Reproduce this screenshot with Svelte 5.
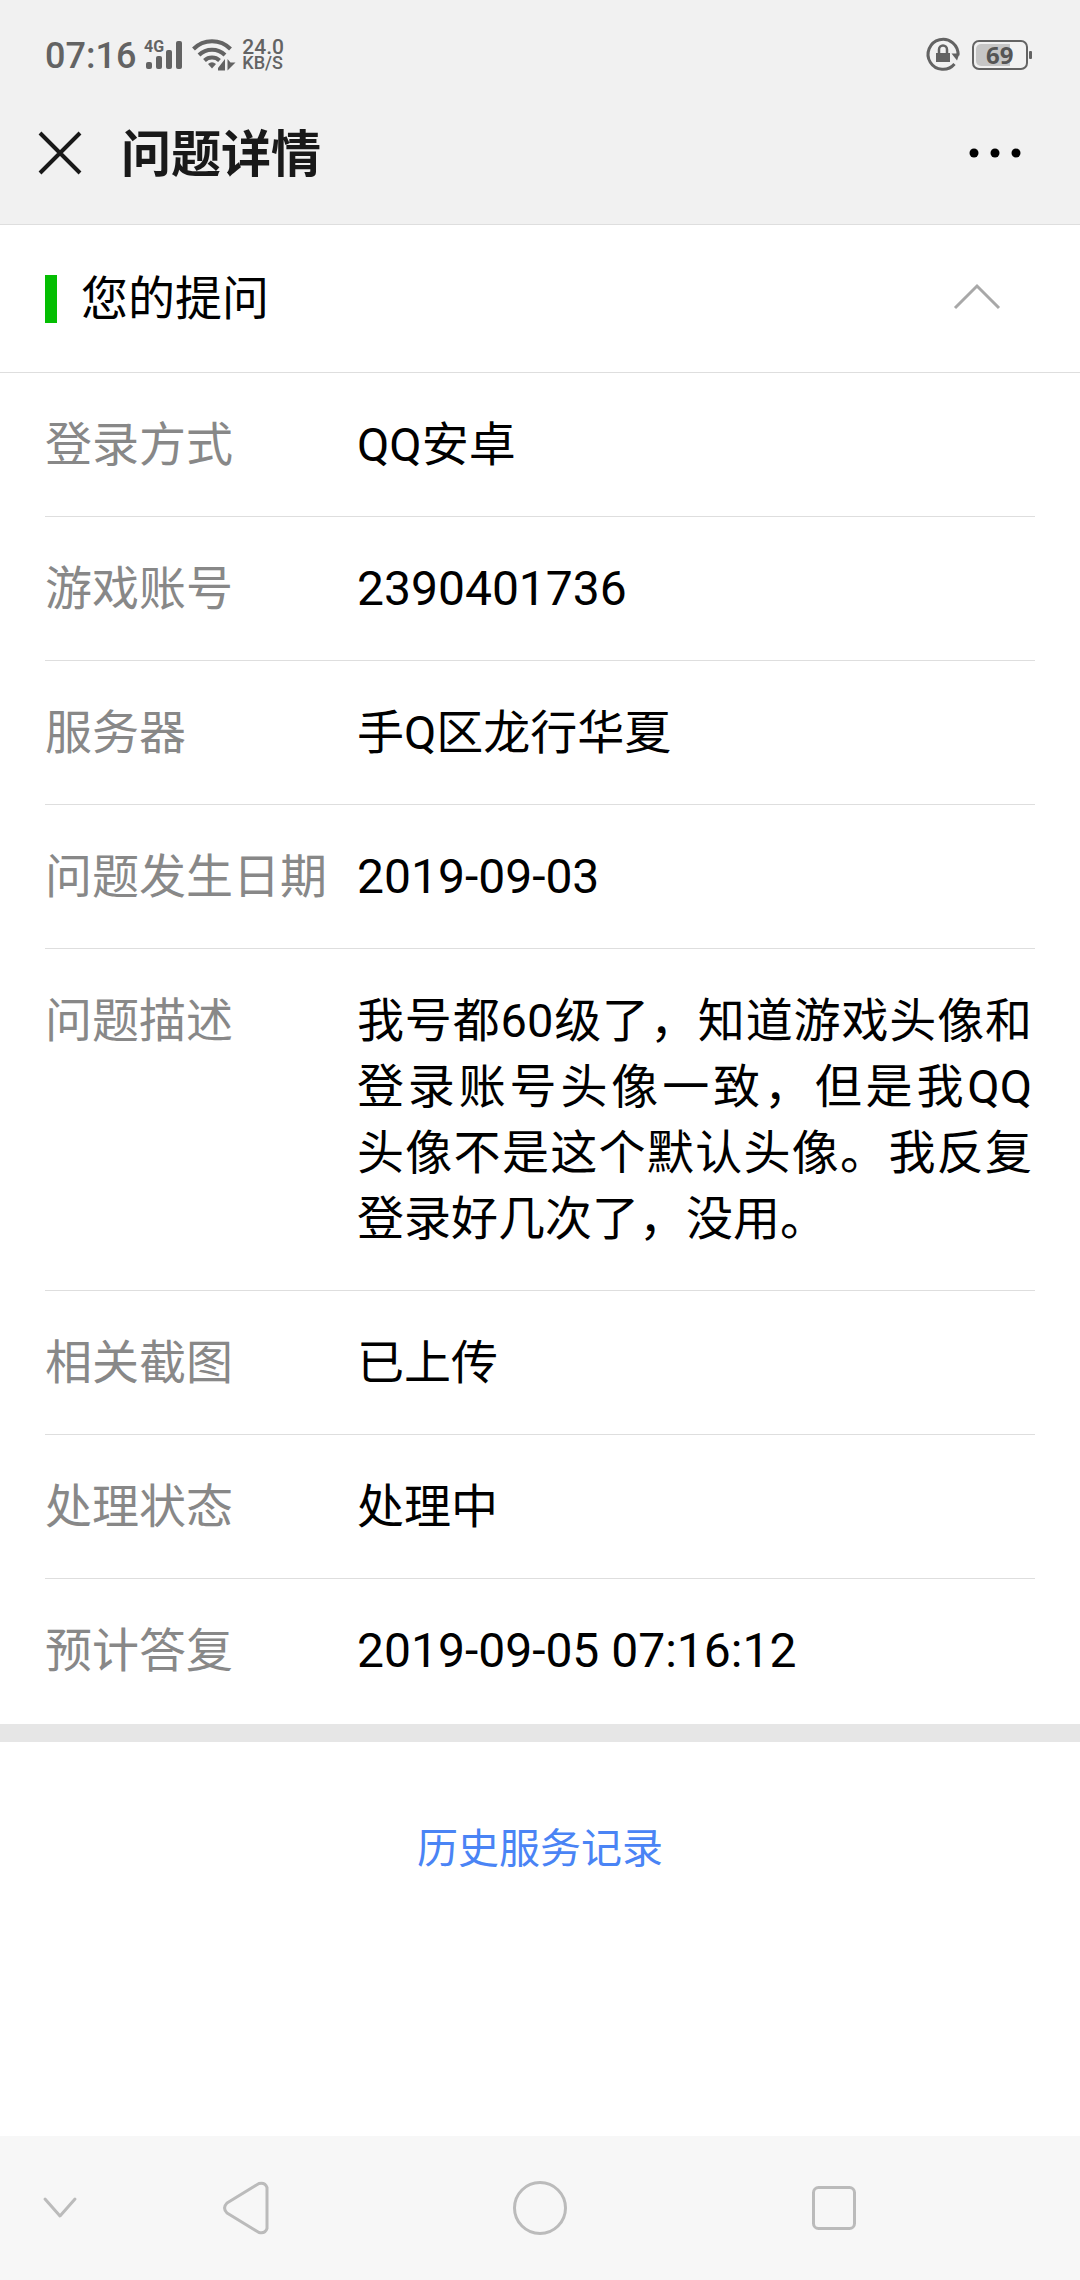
<script>
  let open = true

  const details = [
    { label: '登录方式', value: 'QQ安卓' },
    { label: '游戏账号', value: '2390401736', numeric: true },
    { label: '服务器', value: '手Q区龙行华夏' },
    { label: '问题发生日期', value: '2019-09-03', numeric: true },
    { label: '问题描述', value: '我号都60级了，知道游戏头像和登录账号头像一致，但是我QQ头像不是这个默认头像。我反复登录好几次了，没用。' },
    { label: '相关截图', value: '已上传' },
    { label: '处理状态', value: '处理中' },
    { label: '预计答复', value: '2019-09-05 07:16:12', numeric: true }
  ]
</script>

<div class="page">
  <header>
    <div class="status-bar">
      <span class="time">07:16</span>

      <svg class="signal" width="40" height="32" viewBox="0 0 40 32">
        <text x="0" y="13">4G</text>
        <rect x="2" y="23" width="6" height="7" rx="2" />
        <rect x="12" y="17" width="6" height="13" rx="2" />
        <rect x="22" y="11" width="6" height="19" rx="2" />
        <rect x="32" y="2" width="6" height="28" rx="2" />
      </svg>

      <svg class="wifi" width="44" height="32" viewBox="0 0 44 32">
        <g fill="none" stroke="#636363" stroke-width="4">
          <path d="M1.5 10a26 26 0 0 1 37 0" />
          <path d="M7 16a18.500 18.500 0 0 1 26 0" />
          <path d="M12.500 21.500a11 11 0 0 1 15 0" />
        </g>
        <path d="M16 25q4-3.500 8 0l-4 4.500z" />
        <path class="arrows" d="M33 20v11.500h-7v-2.500z M35.500 31.500V20l3 3.500h5z" />
      </svg>

      <div class="speed">
        <span>24.0</span>
        <small>KB/S</small>
      </div>

      <svg class="lock" width="34" height="34" viewBox="0 0 34 34">
        <path d="M32 17.500A15 15 0 1 0 28.500 26" fill="none" stroke="#636363" stroke-width="3" />
        <path d="M25.500 15.500h8l-2.500 7z" />
        <rect x="10" y="15" width="14" height="9" />
        <path d="M13 15.500v-4a4 4 0 0 1 8 0v4" fill="none" stroke="#636363" stroke-width="2.500" />
      </svg>

      <svg class="battery" width="60" height="30" viewBox="0 0 60 30">
        <path d="M38 4v22H9a5 5 0 0 1-5-5V9a5 5 0 0 1 5-5z" fill="#c6c6c6" />
        <rect x="1" y="1" width="54" height="28" rx="6" fill="none" stroke="#636363" stroke-width="2" />
        <rect x="57" y="11" width="3" height="8" rx="1" />
        <text x="14" y="24">69</text>
      </svg>
    </div>

    <div class="title-bar">
      <button type="button" class="close" aria-label="关闭">
        <svg width="42" height="42" viewBox="0 0 42 42">
          <path d="M1 1l40 40M41 1L1 41" fill="none" stroke="#191919" stroke-width="4" />
        </svg>
      </button>
      <h1>问题详情</h1>
      <button type="button" class="more" aria-label="更多">
        <svg width="52" height="10" viewBox="0 0 52 10">
          <circle cx="5" cy="5" r="4.500" />
          <circle cx="26" cy="5" r="4.500" />
          <circle cx="47" cy="5" r="4.500" />
        </svg>
      </button>
    </div>
  </header>

  <main>
    <div class="section-title">
      <h2>您的提问</h2>
      <button type="button" aria-label="收起" aria-expanded={open} on:click={() => { open = !open }}>
        <svg class:closed={!open} width="48" height="32" viewBox="0 0 48 32">
          <path d="M2 25L24 3l22 22" fill="none" stroke="#a8a8a8" stroke-width="3" />
        </svg>
      </button>
    </div>

    {#if open}
      <dl>
        {#each details as item}
          <div class="row">
            <dt>{item.label}</dt>
            <dd class:numeric={item.numeric}>{item.value}</dd>
          </div>
        {/each}
      </dl>
    {/if}

    <div class="history">
      <a href="#history">历史服务记录</a>
    </div>
  </main>

  <nav>
    <button type="button" aria-label="隐藏">
      <svg width="34" height="22" viewBox="0 0 34 22">
        <path d="M2 2l15 17L32 2" />
      </svg>
    </button>
    <button type="button" aria-label="返回">
      <svg width="46" height="54" viewBox="0 0 46 54">
        <path d="M36 2.500L4 22q-5 5 0 10l32 19.500q6 1.500 8-4V6.500q-2-5.500-8-4z" />
      </svg>
    </button>
    <button type="button" aria-label="主页">
      <svg width="54" height="54" viewBox="0 0 54 54">
        <circle cx="27" cy="27" r="25.500" />
      </svg>
    </button>
    <button type="button" aria-label="最近任务">
      <svg width="44" height="44" viewBox="0 0 44 44">
        <rect x="1.500" y="1.500" width="41" height="41" rx="5" />
      </svg>
    </button>
  </nav>
</div>

<style>
  :global(body) {
    margin: 0;
    background: #fff;
  }

  .page {
    display: flex;
    flex-direction: column;
    min-height: 100vh;
    font-family: Roboto, "Noto Sans CJK SC", sans-serif;
    color: #000;
  }

  button {
    display: flex;
    align-items: center;
    justify-content: center;
    padding: 0;
    border: none;
    background: none;
    cursor: pointer;
  }

  svg {
    display: block;
    overflow: visible;
  }

  header {
    background: #f1f1f1;
    border-bottom: 1px solid #dedede;
  }

  .status-bar {
    display: flex;
    align-items: center;
    height: 110px;
    padding: 0 48px 0 45px;
    color: #636363;
  }

  .status-bar svg {
    fill: #636363;
  }

  .time {
    padding-top: 2px;
    font-size: 36px;
    font-weight: 500;
    line-height: 40px;
  }

  .signal {
    margin-left: 8px;
  }

  .signal text {
    font-size: 16px;
    font-weight: 700;
  }

  .wifi {
    margin-left: 8px;
  }

  .arrows {
    stroke: #f1f1f1;
    stroke-width: 2;
    paint-order: stroke;
  }

  .speed {
    display: flex;
    flex-direction: column;
    margin: 0 auto 0 6px;
    font-weight: 500;
    line-height: 16px;
  }

  .speed span {
    font-size: 21px;
  }

  .speed small {
    font-size: 18px;
  }

  .battery {
    margin-left: 12px;
  }

  .battery text {
    font-family: "Noto Sans", sans-serif;
    font-size: 24px;
    font-weight: 700;
    fill: #555;
  }

  .title-bar {
    display: flex;
    align-items: center;
    height: 86px;
    padding: 0 59px 28px 39px;
  }

  h1 {
    flex: 1;
    margin: 0 0 0 40px;
    padding-top: 4px;
    font-size: 50px;
    font-weight: 700;
    line-height: 64px;
    color: #191919;
  }

  main {
    flex: 1;
  }

  .section-title {
    display: flex;
    align-items: center;
    justify-content: space-between;
    height: 147px;
    padding: 0 79px 0 45px;
    border-bottom: 1px solid #dedede;
  }

  h2 {
    display: flex;
    align-items: center;
    gap: 24px;
    margin: 0;
    font-size: 47px;
    font-weight: 400;
    line-height: 66px;
  }

  h2::before {
    content: "";
    width: 12px;
    height: 48px;
    background: #04be02;
  }

  .closed {
    transform: rotate(180deg);
  }

  dl {
    margin: 0;
    padding: 0 45px 2px;
    border-bottom: 18px solid #e6e6e6;
  }

  .row {
    display: flex;
    padding: 39px 0 38px;
    border-bottom: 1px solid #dedede;
    font-size: 47px;
    line-height: 66px;
  }

  .row:last-child {
    border-bottom: none;
  }

  dt {
    flex: none;
    width: 312px;
    color: #888;
  }

  dd {
    flex: 1;
    margin: 0;
    padding-right: 3px;
    text-align: justify;
  }

  .numeric {
    font-size: 48px;
  }

  .history {
    padding: 77px 0;
    text-align: center;
  }

  .history a {
    font-size: 41px;
    line-height: 60px;
    color: #4a84f5;
    text-decoration: none;
  }

  nav {
    display: grid;
    grid-template-columns: 120px 3fr 4fr 3fr 120px;
    height: 144px;
    background: #f7f7f7;
  }

  nav svg {
    fill: none;
    stroke: #bbb;
    stroke-width: 3;
    stroke-linecap: round;
    stroke-linejoin: round;
  }
</style>
